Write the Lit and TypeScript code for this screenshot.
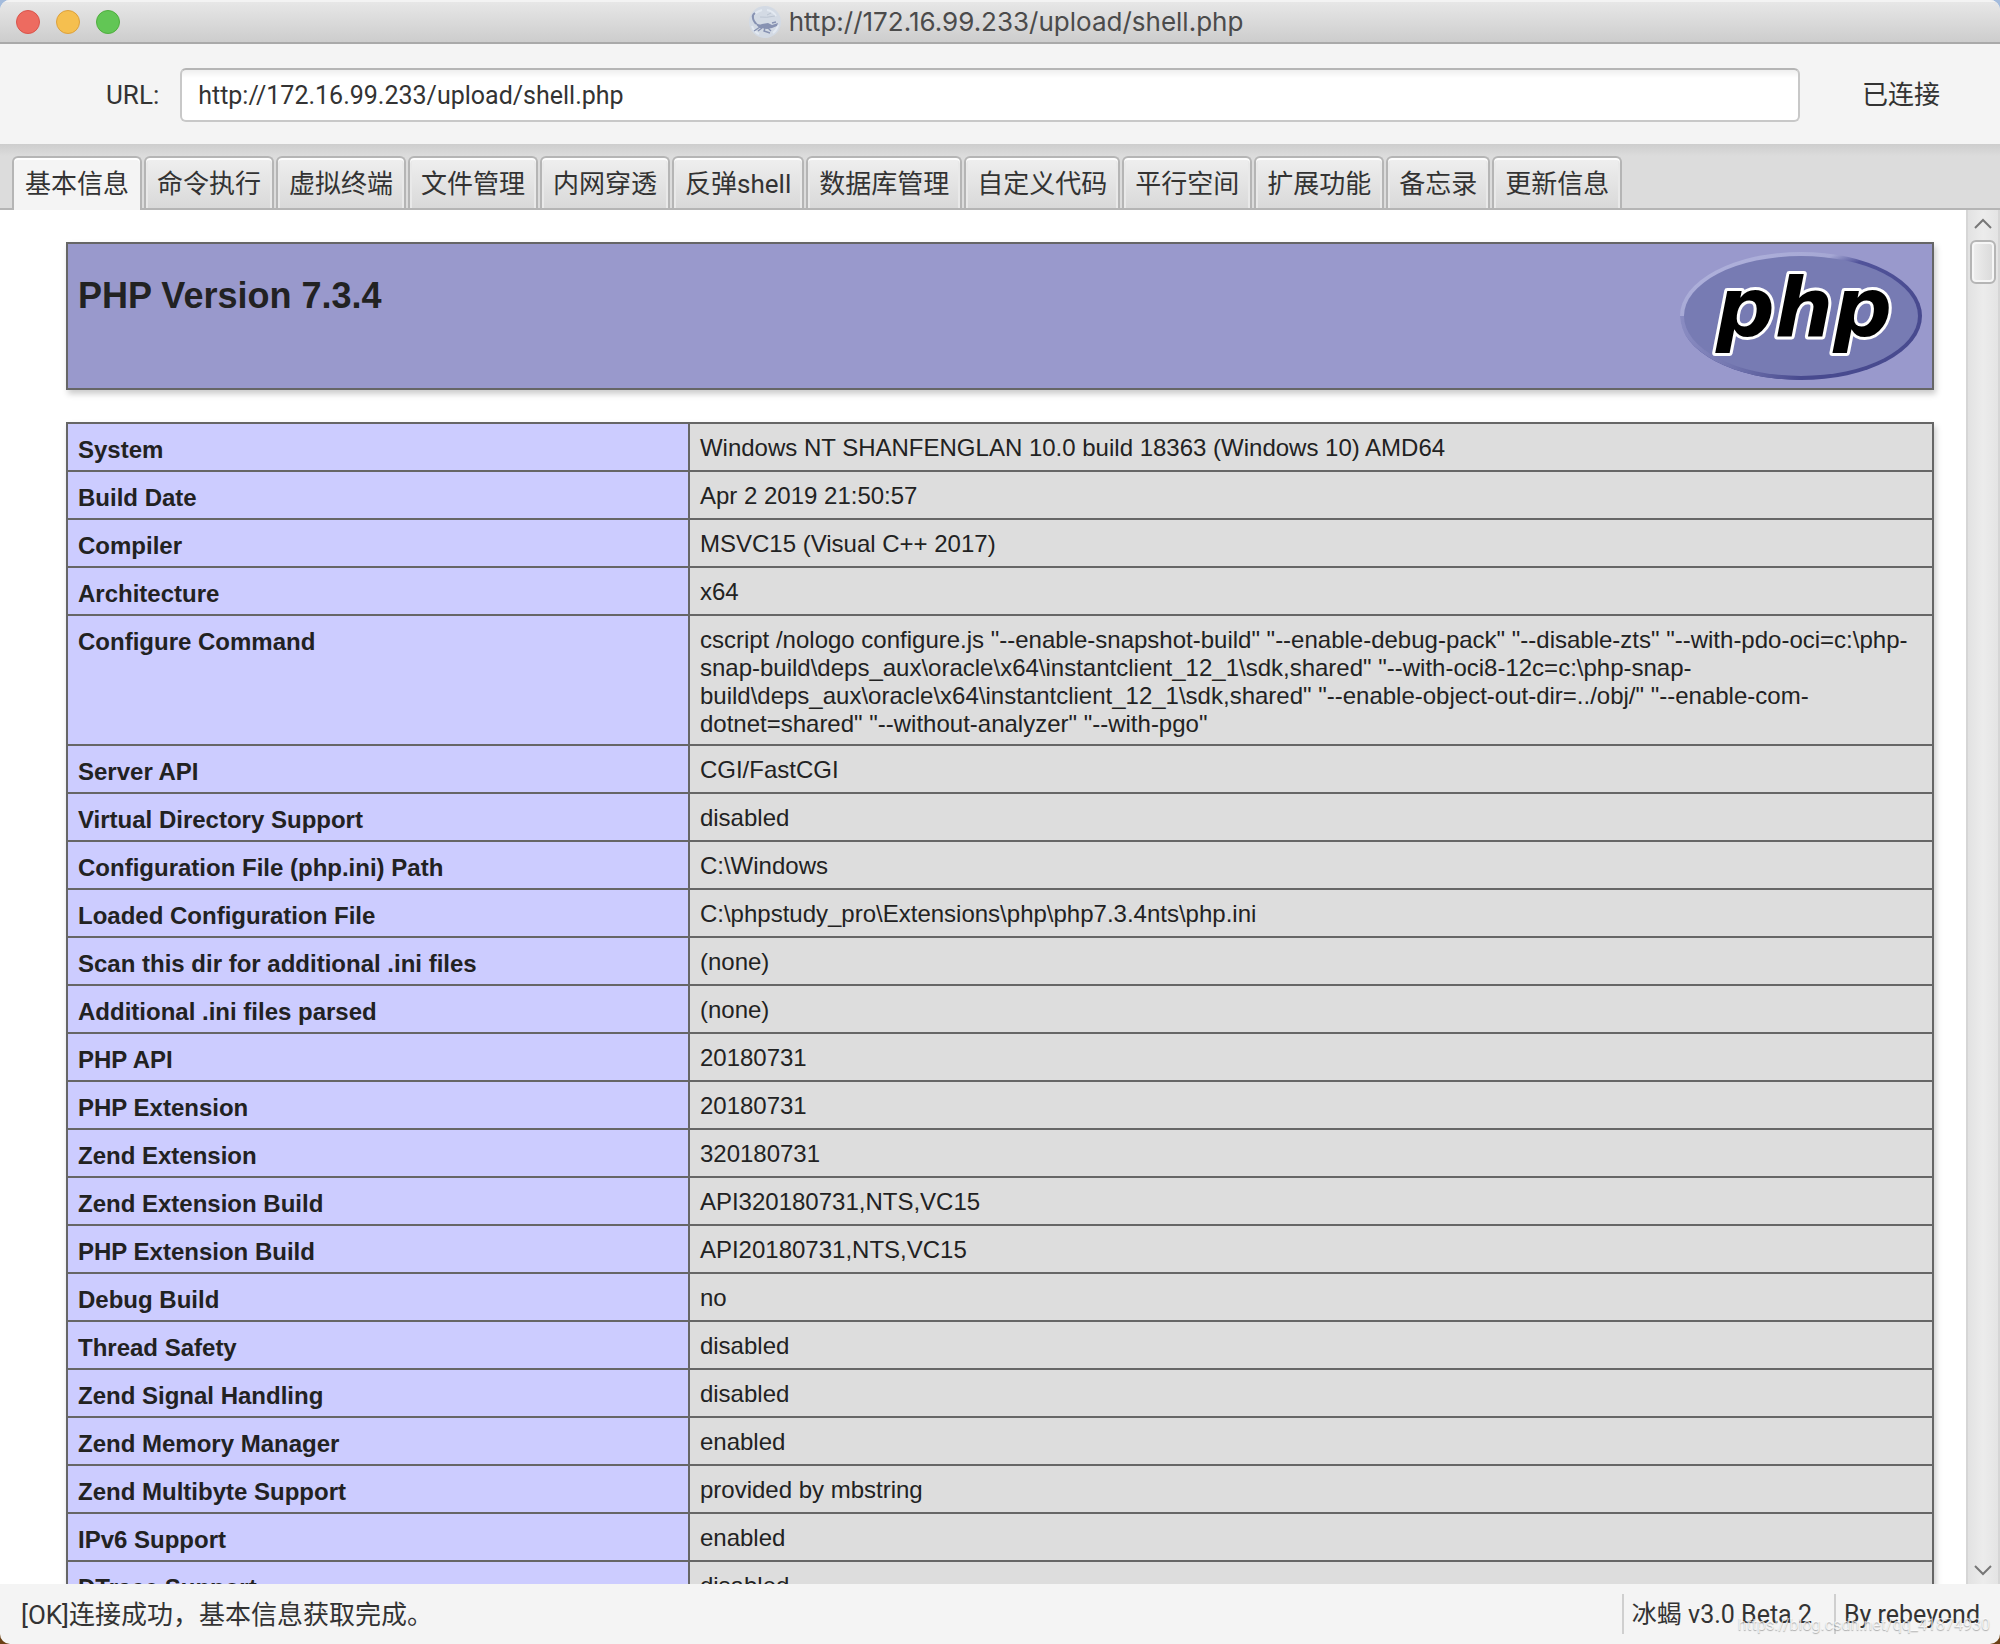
import { LitElement, html, css, svg } from "lit";
import { customElement, property, state } from "lit/decorators.js";
import { classMap } from "lit/directives/class-map.js";

const TABS = [
  "基本信息", "命令执行", "虚拟终端", "文件管理", "内网穿透", "反弹shell",
  "数据库管理", "自定义代码", "平行空间", "扩展功能", "备忘录", "更新信息",
];

const INFO: [string, string][] = [
  ["System", "Windows NT SHANFENGLAN 10.0 build 18363 (Windows 10) AMD64"],
  ["Build Date", "Apr 2 2019 21:50:57"],
  ["Compiler", "MSVC15 (Visual C++ 2017)"],
  ["Architecture", "x64"],
  [
    "Configure Command",
    'cscript /nologo configure.js "--enable-snapshot-build" "--enable-debug-pack" "--disable-zts" "--with-pdo-oci=c:\\php-snap-build\\deps_aux\\oracle\\x64\\instantclient_12_1\\sdk,shared" "--with-oci8-12c=c:\\php-snap-build\\deps_aux\\oracle\\x64\\instantclient_12_1\\sdk,shared" "--enable-object-out-dir=../obj/" "--enable-com-dotnet=shared" "--without-analyzer" "--with-pgo"',
  ],
  ["Server API", "CGI/FastCGI"],
  ["Virtual Directory Support", "disabled"],
  ["Configuration File (php.ini) Path", "C:\\Windows"],
  ["Loaded Configuration File", "C:\\phpstudy_pro\\Extensions\\php\\php7.3.4nts\\php.ini"],
  ["Scan this dir for additional .ini files", "(none)"],
  ["Additional .ini files parsed", "(none)"],
  ["PHP API", "20180731"],
  ["PHP Extension", "20180731"],
  ["Zend Extension", "320180731"],
  ["Zend Extension Build", "API320180731,NTS,VC15"],
  ["PHP Extension Build", "API20180731,NTS,VC15"],
  ["Debug Build", "no"],
  ["Thread Safety", "disabled"],
  ["Zend Signal Handling", "disabled"],
  ["Zend Memory Manager", "enabled"],
  ["Zend Multibyte Support", "provided by mbstring"],
  ["IPv6 Support", "enabled"],
  ["DTrace Support", "disabled"],
];

const scorpionIcon = svg`
  <svg class="app-icon" viewBox="0 0 32 32" aria-hidden="true">
    <circle cx="16" cy="16" r="16" fill="#d3dae4"/>
    <path d="M4 9q5-4 9-5M18 4q6 1 9 6M3 20q2 6 7 8M24 27q4-3 5-8" fill="none" stroke="#e3e9f1" stroke-width="2"/>
    <path d="M11 11q6 1 15-1M18 9l4-2" fill="none" stroke="#bcc5d2" stroke-width="1"/>
    <path d="M6 7Q3 9 4 12Q4 14 7 18" fill="none" stroke="#8792b2" stroke-width="2"/>
    <path d="M6 15Q9 20 13 18L19 17L23 19L29 17L28 20L23 22L18 23L11 22Q7 20 6 15Z" fill="#8792b2"/>
    <path d="M11 21l-6 4M13 22l-4 3M16 22l-1 3l6 2M19 22l3 3M23 17l4-1" fill="none" stroke="#8792b2" stroke-width="1.4"/>
  </svg>`;

const phpLogo = svg`
  <svg class="logo" viewBox="0 0 242 128" role="img" aria-label="PHP logo">
    <defs>
      <linearGradient id="rim" x1="0.2" y1="0" x2="0.75" y2="0.6">
        <stop offset="0" stop-color="#b0b2dc"/>
        <stop offset="0.38" stop-color="#a5a7d4"/>
        <stop offset="0.52" stop-color="#51539a"/>
        <stop offset="1" stop-color="#484a8f"/>
      </linearGradient>
      <linearGradient id="fade" x1="0" y1="0" x2="1" y2="0">
        <stop offset="0" stop-color="#8a8cc2"/>
        <stop offset="0.4" stop-color="#7477b0"/>
        <stop offset="1" stop-color="#484a8f"/>
      </linearGradient>
    </defs>
    <ellipse cx="121" cy="64" rx="121" ry="64" fill="url(#rim)"/>
    <path d="M0 64A121 64 0 0 0 121 128V64Z" fill="url(#fade)"/>
    <ellipse cx="121" cy="64" rx="117" ry="60" fill="#777bb3"/>
    <text class="wordmark" x="124" y="84" text-anchor="middle">php</text>
  </svg>`;

@customElement("scroll-rail")
export class ScrollRail extends LitElement {
  static styles = css`
    :host {
      display: flex;
      flex-direction: column;
      align-items: center;
      width: 30px;
      border-left: 2px solid #d6d6d6;
      border-right: 2px solid #d6d6d6;
      background: linear-gradient(90deg, #e2e2e2, #ececec 50%, #e4e4e4);
    }
    .arrow {
      display: block;
      width: 30px;
      height: 28px;
      padding: 0;
      border: 0;
      background: none;
    }
    .arrow svg { display: block; width: 30px; height: 28px; }
    .thumb {
      box-sizing: border-box;
      width: 26px;
      height: 44px;
      margin: 2px 0 auto;
      border: 2px solid #b5b5b5;
      border-radius: 6px;
      background: linear-gradient(90deg, #efefef, #d9d9d9);
      box-shadow: inset 0 0 0 2px #f6f6f6;
    }
  `;
  render() {
    return html`
      <button class="arrow" aria-label="Scroll up">
        <svg viewBox="0 0 30 28"><path d="M7 18L15 10L23 18" fill="none" stroke="#777" stroke-width="2"/></svg>
      </button>
      <div class="thumb"></div>
      <button class="arrow" aria-label="Scroll down">
        <svg viewBox="0 0 30 28"><path d="M7 10L15 18L23 10" fill="none" stroke="#777" stroke-width="2"/></svg>
      </button>
    `;
  }
}

@customElement("php-info")
export class PhpInfo extends LitElement {
  @property({ attribute: false }) rows: [string, string][] = [];

  static styles = css`
    :host {
      display: flex;
      flex-direction: column;
      gap: 32px;
      padding: 32px 32px 0 66px;
      color: #222;
      font-family: "Liberation Sans", Arial, sans-serif;
    }
    .banner {
      display: flex;
      justify-content: space-between;
      align-items: flex-start;
      padding: 8px 10px;
      border: 2px solid #666;
      background: #9999cc;
      box-shadow: 2px 4px 6px #ccc;
    }
    h1 {
      margin: 24px 0 0;
      font-size: 36px;
      line-height: 40px;
    }
    .logo { display: block; width: 242px; height: 128px; }
    .wordmark {
      font-family: "DejaVu Sans", sans-serif;
      font-size: 82px;
      font-weight: bold;
      font-style: italic;
      fill: #000;
      stroke: #fff;
      stroke-width: 6px;
      stroke-linejoin: round;
      paint-order: stroke;
    }
    table {
      width: 100%;
      table-layout: fixed;
      border-collapse: collapse;
      box-shadow: 2px 4px 6px #ccc;
      font-size: 24px;
      line-height: 28px;
    }
    th, td {
      border: 2px solid #666;
      text-align: left;
      vertical-align: top;
    }
    th {
      width: 33.33%;
      box-sizing: border-box;
      padding: 12px 10px 6px;
      background: #ccccff;
    }
    td {
      padding: 10px 10px 6px;
      background: #ddd;
    }
  `;

  render() {
    return html`
      <header class="banner"><h1>PHP Version 7.3.4</h1>${phpLogo}</header>
      <table>
        <tbody>
          ${this.rows.map(([k, v]) => html`<tr><th scope="row">${k}</th><td>${v}</td></tr>`)}
        </tbody>
      </table>
    `;
  }
}

@customElement("app-root")
export class AppRoot extends LitElement {
  @state() private active = 0;

  static styles = css`
    :host {
      display: block;
      background: linear-gradient(#a3bbdc 50%, #6b4014 50%);
      color: #333;
      font-family: Roboto, "Noto Sans CJK SC", sans-serif;
      font-size: 26px;
      line-height: 32px;
    }
    .window {
      position: relative;
      display: flex;
      flex-direction: column;
      height: 100vh;
      overflow: hidden;
      border-radius: 10px;
      background: #f4f4f4;
    }
    .titlebar {
      display: grid;
      grid-template-columns: 1fr auto 1fr;
      align-items: center;
      box-sizing: border-box;
      height: 44px;
      padding: 2px 16px 0;
      border-bottom: 2px solid #a9a9a9;
      background: linear-gradient(#e8e8e8, #cdcdcd);
      box-shadow: inset 0 2px 0 #f3f3f3;
    }
    .lights { display: flex; gap: 16px; }
    .light {
      box-sizing: border-box;
      width: 24px;
      height: 24px;
      padding: 0;
      border: 1px solid #d9544b;
      border-radius: 50%;
      background: #ed6b60;
    }
    .light.min { border-color: #dca03c; background: #f5bf4f; }
    .light.max { border-color: #4fae3e; background: #62c655; }
    .title {
      display: flex;
      align-items: center;
      gap: 8px;
      padding-right: 8px;
      color: #4b4b4b;
      font-family: Inter, sans-serif;
      font-size: 26px;
    }
    .app-icon { width: 32px; height: 32px; }
    .address {
      display: flex;
      align-items: center;
      padding: 24px 60px 22px 106px;
    }
    .address input {
      flex: 1;
      box-sizing: border-box;
      min-width: 0;
      height: 54px;
      margin: 0 62px 0 21px;
      padding: 0 16px;
      border: 2px solid #c8c8c8;
      border-top-color: #b5b5b5;
      border-radius: 6px;
      background: linear-gradient(#efefef, #fff 8px);
      color: #333;
      font: inherit;
      font-size: 25px;
      outline: none;
    }
    .tabs {
      display: flex;
      gap: 2px;
      padding: 12px 12px 0;
      border-bottom: 2px solid #b5b5b5;
      background: linear-gradient(#cdcdcd, #dcdcdc 12px);
    }
    .tab {
      height: 52px;
      padding: 2px 11px 0;
      border: 2px solid #b5b5b5;
      border-bottom: 0;
      border-radius: 6px 6px 0 0;
      background: linear-gradient(#efefef, #d9d9d9);
      box-shadow: inset 0 2px 0 #fdfdfd, inset 2px 0 0 #e9e9e9, inset -2px 0 0 #e9e9e9;
      color: #333;
      font: inherit;
      white-space: nowrap;
    }
    .tab.active {
      height: 54px;
      margin-bottom: -2px;
      padding-bottom: 2px;
      background: #f4f4f4;
      box-shadow: inset 0 2px 0 #fff;
    }
    .view {
      display: flex;
      flex: 1;
      min-height: 0;
      overflow: hidden;
      background: #fff;
    }
    .page { flex: 1; min-width: 0; overflow: hidden; }
    .status {
      display: flex;
      align-items: center;
      height: 60px;
      padding: 0 20px 0 21px;
    }
    .message { flex: 1; padding-top: 2px; }
    .cell {
      padding: 5px 22px 3px 8px;
      border-left: 2px solid #cfcfcf;
      font-size: 25px;
    }
    .cell.last { padding-right: 0; }
    .watermark {
      position: absolute;
      right: 10px;
      bottom: 9px;
      color: rgba(255, 255, 255, 0.75);
      font-size: 16px;
      line-height: 20px;
      text-shadow: 0 1px 1px rgba(0, 0, 0, 0.3);
      pointer-events: none;
    }
  `;

  render() {
    return html`
      <div class="window">
        <header class="titlebar">
          <div class="lights">
            <button class="light" aria-label="Close"></button>
            <button class="light min" aria-label="Minimize"></button>
            <button class="light max" aria-label="Zoom"></button>
          </div>
          <div class="title">${scorpionIcon}<span>http://172.16.99.233/upload/shell.php</span></div>
        </header>
        <div class="address">
          <label for="url">URL:</label>
          <input id="url" type="text" .value=${"http://172.16.99.233/upload/shell.php"} />
          <span>已连接</span>
        </div>
        <nav class="tabs" role="tablist">
          ${TABS.map((t, i) => html`<button
            role="tab"
            aria-selected=${i === this.active ? "true" : "false"}
            class=${classMap({ tab: true, active: i === this.active })}
            @click=${() => (this.active = i)}
          >${t}</button>`)}
        </nav>
        <main class="view">
          <div class="page"><php-info .rows=${INFO}></php-info></div>
          <scroll-rail></scroll-rail>
        </main>
        <footer class="status">
          <span class="message">[OK]连接成功，基本信息获取完成。</span>
          <span class="cell">冰蝎 v3.0 Beta 2</span>
          <span class="cell last">By rebeyond</span>
        </footer>
        <div class="watermark">https://blog.csdn.net/qq_41874930</div>
      </div>
    `;
  }
}
